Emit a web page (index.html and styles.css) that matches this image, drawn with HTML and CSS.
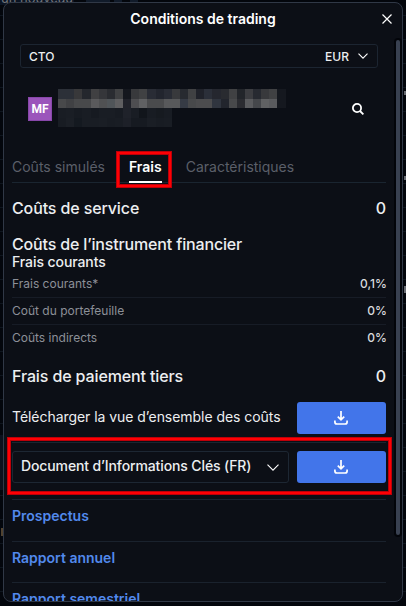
FILE: index.html
```html
<!DOCTYPE html>
<html lang="fr">
<head>
<meta charset="utf-8">
<title>Conditions de trading</title>
<link rel="stylesheet" href="styles.css">
</head>
<body>
<div class="backdrop" aria-hidden="true"><span class="behind-title">un nouveau</span><i class="chip chip-a"></i><i class="chip chip-b"></i><i class="chip chip-c"></i><i class="panel"></i><i class="spark spark-a"></i><i class="spark spark-b"></i><i class="spark spark-c"></i><i class="spark spark-d"></i></div>
<main class="dialog">
  <header class="head">
    <h1>Conditions de trading</h1>
    <svg class="close" viewBox="0 0 10 10"><path d="M.5.5l9 9M9.5.5l-9 9"/></svg>
  </header>
  <div class="content">
    <div class="account"><span>CTO</span><span class="currency">EUR</span><svg class="chev" viewBox="0 0 10 6"><path d="M.5.7 5 5.2 9.5.7"/></svg></div>
    <div class="instrument">
      <div class="avatar">MF</div>
      <div class="masked"><div class="mask-row" id="m1"></div><div class="mask-row" id="m2"></div><div class="mask-row" id="m3"></div><div class="mask-row" id="m4"></div></div>
      <svg class="search" viewBox="0 0 12 12"><circle cx="5" cy="5" r="4.1"/><path d="M8 8l3.4 3.4"/></svg>
    </div>
    <nav class="tabs"><a>Coûts simulés</a><a class="active">Frais</a><a>Caractéristiques</a></nav>
    <div class="total service"><span>Coûts de service</span><span>0</span></div>
    <h2>Coûts de l’instrument financier</h2>
    <h3>Frais courants</h3>
    <div class="cost"><span>Frais courants*</span><b>0,1%</b></div>
    <div class="cost"><span>Coût du portefeuille</span><b>0%</b></div>
    <div class="cost"><span>Coûts indirects</span><b>0%</b></div>
    <div class="total third"><span>Frais de paiement tiers</span><span>0</span></div>
    <div class="download"><span class="overview">Télécharger la vue d’ensemble des coûts</span><button><svg viewBox="0 0 14 14"><path d="M7 0v8M3.8 5.7 7 8.9l3.2-3.2M.9 9.5V11q0 2 2 2h8.2q2 0 2-2V9.5"/></svg></button></div>
    <div class="download document"><div class="select"><span>Document d’Informations Clés (FR)</span><svg class="chev big" viewBox="0 0 12 7"><path d="M.5.7 6 6.2 11.5.7"/></svg></div><button><svg viewBox="0 0 14 14"><path d="M7 0v8M3.8 5.7 7 8.9l3.2-3.2M.9 9.5V11q0 2 2 2h8.2q2 0 2-2V9.5"/></svg></button></div>
    <div class="link">Prospectus</div>
    <div class="link annual">Rapport annuel</div>
    <div class="link">Rapport semestriel</div>
  </div>
  <div class="scrollbar"></div>
</main>
<div class="highlight tab-mark"></div>
<div class="highlight document-mark"></div>
<script src="mask.js"></script>
</body>
</html>
```
FILE: mask.js
```js
const rows = {
  m1: "2c3038 2c3038 38383a 24272d 404042 35363a 2a2c31 404143 14171e 38393c 404143 292c35 22252e 292c35 38393c 272a30 404143 20222a 2b2f39 25272f 292b30 404143 22252a 3c3d41 272a31 38393c 404143 15181f",
  m2: "48494b 404144 48494b 48494b 5a5a5c 505153 505559 5f5f61 20222a 4e4e51 606163 4a4b4d 4a4b4d 58595b 58595b 363b45 48494b 4c4c4e 4c4c4e 30353f 22252d 48494b 2b2c31 5a5b5e 45474b 606163 5a5b5e 15181f",
  m3: "191d24 1a1e25 171b22 191d24 161a21 191d24 191d24 171b22 1f222a 191d24 11151b 181c23 161a20 181c23",
  m4: "181c23 1b1f26 141920 191d24 191d24 1a1e25 181c23 191d24 1d2028 161a21 161a21 1a1e25 181c23 191d24"
};
for (const [id, colors] of Object.entries(rows)) {
  for (const color of colors.split(" ")) {
    const cell = document.createElement("i");
    cell.style.background = "#" + color;
    document.getElementById(id).append(cell);
  }
}
```
FILE: styles.css
```css
* { box-sizing: border-box; }
body { margin: 0; width: 406px; height: 606px; overflow: hidden; position: relative; padding: 2px 3px; background: #03060c; color: #eceef0; font-family: Inter, "Liberation Sans", sans-serif; }
.backdrop { position: absolute; inset: 0; background: repeating-linear-gradient(#03060c 0 15px, #0e151e 15px 16px, #03060c 16px 24px); overflow: hidden; }
.behind-title { position: absolute; left: 0; top: -9px; padding: 0 1px; font-size: 13px; line-height: 14px; color: #72757a; background: #0b1423; }
.chip { position: absolute; top: 0; height: 2px; background: #111b2a; }
.chip-a { left: 86px; width: 24px; }
.chip-b { left: 114px; width: 8px; }
.chip-c { left: 130px; width: 8px; }
.panel { position: absolute; left: 0; top: 435px; width: 3px; height: 55px; background: #0b111d; }
.spark { position: absolute; width: 2px; height: 4px; background: #686b72; }
.spark-a { left: 404px; top: 91px; }
.spark-b { left: 404px; top: 176px; }
.spark-c { left: 404px; top: 286px; height: 7px; }
.spark-d { left: 1px; top: 528px; height: 8px; background: #514330; }
.dialog { position: relative; width: 400px; height: 600px; background: #0c0f16; border: 1px solid #303846; border-radius: 8px; overflow: hidden; }
.head { height: 41px; padding-top: 6px; display: flex; justify-content: center; }
h1, h2, h3 { margin: 0; }
h1 { font-size: 14px; line-height: 20px; font-weight: 600; color: #fff; }
svg { fill: none; stroke: #fff; display: block; flex: none; }
.close { position: absolute; right: 10px; top: 11px; width: 10px; height: 10px; stroke-width: 1.2; }
.content { padding: 0 16px 0 8px; }
.account { height: 24px; margin: 0 8px; padding: 0 9px 0 8px; display: flex; align-items: center; border: 1px solid #1c2531; border-radius: 3px; font-size: 12px; font-weight: 500; }
.currency { margin-left: auto; margin-right: 9px; }
.chev { width: 10px; height: 6px; stroke-width: 1.1; }
.instrument { height: 80px; padding: 2px 22px 0 16px; display: flex; align-items: center; }
.avatar { width: 24px; height: 24px; background: #9b55bb; border: 1px solid #8847aa; color: #fff; font: 700 12px/22px Roboto, sans-serif; text-align: center; }
.masked { margin-left: 6px; height: 38px; margin-top: -2px; }
.mask-row { display: flex; height: 10px; }
.mask-row:nth-child(even) { height: 9px; }
.mask-row i { width: 8.14px; }
.search { width: 12px; height: 12px; margin-left: auto; stroke-width: 1.8; }
.tabs { display: flex; gap: 24px; height: 35px; border-bottom: 1px solid #1a2530; font-size: 14px; line-height: 38px; color: #5b5f69; }
.tabs a { height: 35px; }
.tabs .active { color: #fff; font-weight: 600; border-bottom: 2px solid #fff; }
.total { display: flex; justify-content: space-between; font-size: 16px; line-height: 24px; font-weight: 500; letter-spacing: -.12px; }
.service { margin-top: 13px; }
h2 { margin-top: 12px; font-size: 16px; line-height: 24px; font-weight: 500; letter-spacing: -.16px; }
h3 { margin-top: -1px; font-size: 14px; line-height: 14px; font-weight: 500; letter-spacing: -.08px; }
.cost { height: 27px; padding-bottom: 2px; display: flex; align-items: center; justify-content: space-between; border-bottom: 1px solid #171c26; font-size: 12px; color: #8c9098; }
h3 + .cost { margin-top: 2px; }
.cost b { font-weight: 500; color: #d8dadd; margin-right: -1px; }
.cost:has(+ .third) { border-bottom-color: transparent; }
.third { margin-top: 12px; }
.download { display: flex; justify-content: space-between; align-items: flex-start; height: 41px; margin-top: 14px; border-bottom: 1px solid #1a2530; font-size: 14px; }
.overview { white-space: nowrap; line-height: 30px; letter-spacing: -.05px; }
button { width: 89px; height: 32px; padding: 0 2px 0 0; border: 0; border-radius: 3px; background: #4275ea; display: grid; place-items: center; }
button svg { width: 14px; height: 14px; stroke-width: 1.7; }
.document { height: 57px; margin: 0; padding: 8px 0 0; }
.select { width: 277px; height: 32px; border: 1px solid #1d2733; border-radius: 3px; padding: 0 9px 0 8px; display: flex; align-items: center; justify-content: space-between; font-weight: 500; white-space: nowrap; }
.select span { line-height: 28px; padding-bottom: 2px; letter-spacing: -.12px; }
.big { width: 12px; height: 7px; }
.link { height: 42px; border-bottom: 1px solid #1a222d; font-size: 14px; line-height: 32px; font-weight: 600; color: #5289ec; }
.link.annual { height: 41px; }
.scrollbar { position: absolute; right: 2px; top: 37px; width: 4px; height: 495px; border-radius: 2px; background: #394151; box-shadow: 0 0 0 2px #03050a; }
.highlight { position: absolute; border: 2px solid #ff0004; box-shadow: 0 0 0 1px #bd0009, inset 0 0 0 1px #bd0009; }
.tab-mark { left: 117px; top: 152px; width: 54px; height: 35px; }
.document-mark { left: 8px; top: 438px; width: 383px; height: 56px; }
```
